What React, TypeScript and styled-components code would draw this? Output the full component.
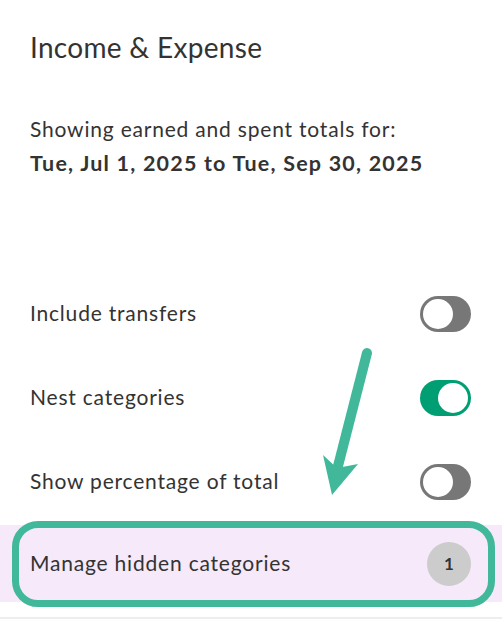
import { createGlobalStyle } from "styled-components";
import styled from "styled-components";

const GlobalStyle = createGlobalStyle`
  html, body {
    margin: 0;
    padding: 0;
    background: #ffffff;
  }
  body {
    font-family: "Lato", "Open Sans", sans-serif;
    color: #333333;
  }
`;

const Wrapper = styled.section`
  position: relative;
  width: 502px;
  height: 638px;
  overflow: hidden;
  background: #ffffff;
`;

const Header = styled.div`
  padding: 30px 30px 0 30px;
`;

const Title = styled.h1`
  margin: 0;
  font-size: 28px;
  font-weight: 400;
  letter-spacing: 0.3px;
  line-height: 34px;
  color: #333333;
`;

const Summary = styled.div`
  margin-top: 48px;
  font-size: 21px;
  letter-spacing: 0.8px;
  line-height: 34px;
  color: #333333;
`;

const Dates = styled.div`
  font-weight: 700;
  font-size: 21.5px;
  letter-spacing: 1.2px;
`;

const Options = styled.div`
  margin-top: 92px;
  display: flex;
  flex-direction: column;
`;

const Row = styled.div<{ $highlight?: boolean }>`
  position: relative;
  display: flex;
  align-items: center;
  justify-content: space-between;
  height: ${(p) => (p.$highlight ? "77px" : "84px")};
  padding: 0 31px 0 30px;
  margin-top: ${(p) => (p.$highlight ? "1px" : "0")};
  background: ${(p) => (p.$highlight ? "#f5e9fa" : "transparent")};
  font-size: 21px;
  letter-spacing: 0.8px;
  color: #333333;
`;

const Label = styled.span`
  padding-bottom: 3px;
`;

const Toggle = styled.div<{ $on?: boolean }>`
  position: relative;
  width: 51px;
  height: 36px;
  border-radius: 18px;
  background: ${(p) => (p.$on ? "#009e73" : "#777777")};
  &::after {
    content: "";
    position: absolute;
    top: 3px;
    left: ${(p) => (p.$on ? "18px" : "3px")};
    width: 30px;
    height: 30px;
    border-radius: 50%;
    background: #ffffff;
  }
`;

const Badge = styled.div`
  width: 44px;
  height: 44px;
  border-radius: 50%;
  background: #cccccc;
  display: flex;
  align-items: center;
  justify-content: center;
  font-size: 17px;
  font-weight: 700;
  letter-spacing: 0;
  color: #333333;
`;

const Outline = styled.div`
  position: absolute;
  left: 12px;
  right: 7px;
  top: -4px;
  bottom: -5px;
  border: 7px solid #42b89a;
  border-radius: 26px;
  pointer-events: none;
`;

const Divider = styled.div`
  margin-top: 15px;
  height: 2px;
  background: #eeeeee;
`;

const Arrow = styled.svg`
  position: absolute;
  left: 300px;
  top: 330px;
  pointer-events: none;
`;

const toggles = [
  { label: "Include transfers", on: false },
  { label: "Nest categories", on: true },
  { label: "Show percentage of total", on: false },
];

const App = () => {
  return (
    <Wrapper>
      <GlobalStyle />
      <Header>
        <Title>Income &amp; Expense</Title>
        <Summary>
          Showing earned and spent totals for:
          <Dates>Tue, Jul 1, 2025 to Tue, Sep 30, 2025</Dates>
        </Summary>
      </Header>
      <Options>
        {toggles.map((t) => (
          <Row key={t.label}>
            <Label>{t.label}</Label>
            <Toggle $on={t.on} />
          </Row>
        ))}
        <Row $highlight>
          <Label>Manage hidden categories</Label>
          <Badge>1</Badge>
          <Outline />
        </Row>
        <Divider />
      </Options>
      <Arrow width="100" height="180" viewBox="0 0 100 180">
        <line x1="67" y1="23" x2="37" y2="140" stroke="#42b89a" strokeWidth="10" strokeLinecap="round" />
        <polygon points="23,125 37,138 58,134 32,165" fill="#42b89a" />
      </Arrow>
    </Wrapper>
  );
};

export default App;
